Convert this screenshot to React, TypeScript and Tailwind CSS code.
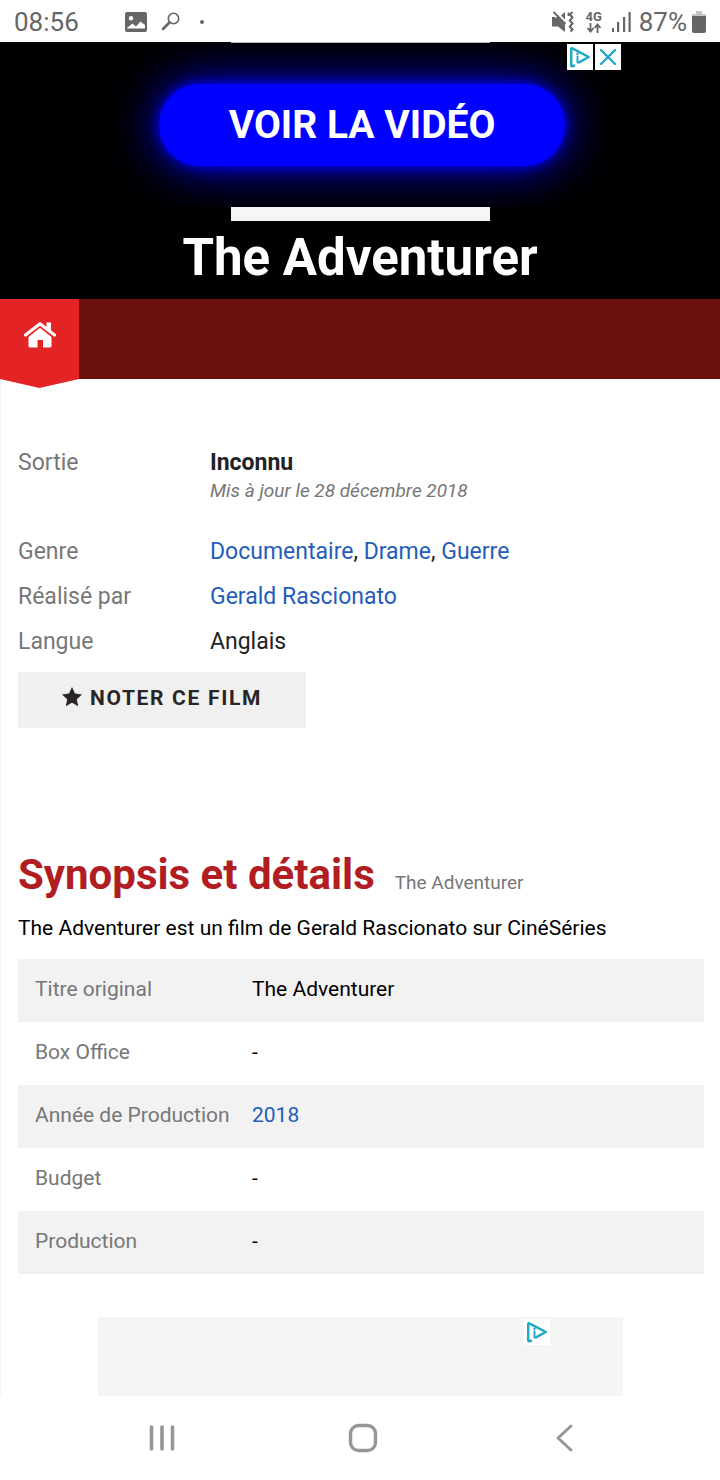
import React from "react";

const links = "text-[#245db8]";

const facts = [
  { label: "Titre original", value: "The Adventurer" },
  { label: "Box Office", value: "-" },
  { label: "Année de Production", value: "2018", href: "#2018" },
  { label: "Budget", value: "-" },
  { label: "Production", value: "-" },
];

const AdChoicesIcon: React.FC = () => (
  <svg viewBox="0 0 26 26" className="size-[26px] bg-white" fill="none" stroke="#1fa9c4" strokeLinejoin="round" strokeLinecap="round">
    <path d="M7 21.800 5 22.300Q4.200 22.300 4.200 21V5Q4.200 4 5.400 4.400L21.800 13 12 18.300" strokeWidth="2.500" />
    <path d="M10.500 12.500V18.500" strokeWidth="2" />
    <circle cx="10.500" cy="9.700" r="1.200" fill="#1fa9c4" stroke="none" />
  </svg>
);

const StatusBar: React.FC = () => (
  <div className="flex h-[42px] items-center justify-between bg-white pt-0.5 pr-[13px] pl-3.5 text-[26px] leading-8 text-[#666]">
    <div className="flex items-center">
      <span className="w-[111px]">08:56</span>
      <svg viewBox="0 0 22 20" className="mr-3.5 h-5 w-[22px]" fill="#666">
        <path fillRule="evenodd" d="M2 0H20Q22 0 22 2V18Q22 20 20 20H2Q0 20 0 18V2Q0 0 2 0ZM2 16.500H20V13L15.500 9.500 11 14.500 7.500 11.500 2 16ZM6 4A2.200 2.200 0 1 0 6 8.400 2.200 2.200 0 1 0 6 4Z" />
      </svg>
      <svg viewBox="0 0 20 20" className="mr-[19px] size-5" fill="none" stroke="#666">
        <circle cx="12.500" cy="6.500" r="5.200" strokeWidth="1.600" />
        <path d="M8.500 10.500 2 17" strokeWidth="2.600" strokeLinecap="round" />
      </svg>
      <span className="size-1 rounded-full bg-[#666]" />
    </div>
    <div className="flex items-center">
      <svg viewBox="0 0 22 24" className="mr-3 h-6 w-[22px]" fill="none" stroke="#666">
        <path d="M0 7H3L13 17V22L6 16.500H0ZM9 5.500 13 2V9.500Z" fill="#666" stroke="none" />
        <path d="M1.500 2 13.500 14" strokeWidth="1.800" />
        <path d="M5 6 13 14V17L4 9Z" fill="#666" stroke="none" />
        <path d="M16.500 2.500V6" strokeWidth="1.800" />
        <path d="M20.500 2 17.800 4.500 20.500 7.500 17.800 10.500 20.500 13.500 17.800 16.500 20.500 19.500 18.500 21.500" strokeWidth="2" />
      </svg>
      <div className="mr-2.5 flex w-4 flex-col items-center">
        <span className="text-[13px] leading-3 font-bold">4G</span>
        <svg viewBox="0 0 16 10" className="h-2.5 w-4" fill="none" stroke="#666" strokeWidth="1.800">
          <path d="M4.500 0V8M1.500 5 4.500 8.500 7.500 5M11.500 10V2M8.500 5 11.500 1.500 14.500 5" />
        </svg>
      </div>
      <svg viewBox="0 0 19 20" className="mr-2 h-5 w-[19px]" fill="#666">
        <path d="M0 16H2V20H0ZM5 10H7.200V20H5ZM11 5H13.200V20H11ZM16.500 0H18.700V20H16.500Z" />
      </svg>
      <span className="mr-1">87%</span>
      <svg viewBox="0 0 16 22" className="h-[22px] w-4">
        <path d="M5 0H11V3H15V6H1V3H5Z" fill="#c4c4c4" />
        <path d="M1 5H15V20Q15 22 13 22H3Q1 22 1 20Z" fill="#666" />
      </svg>
    </div>
  </div>
);

const AdBanner: React.FC = () => (
  <header className="relative flex h-[257px] flex-col items-center overflow-hidden bg-black text-white">
    <div className="h-px w-[259px] shrink-0 bg-[#bbb]" />
    <div className="flex h-[164px] w-full shrink-0 items-center justify-center overflow-hidden pl-1">
      <button
        type="button"
        className="h-[82px] w-[406px] rounded-full bg-[#0000fe] text-[39px] leading-10 font-bold shadow-[0_0_12px_#0000fe,0_0_50px_#0000fe]"
      >
        VOIR LA VIDÉO
      </button>
    </div>
    <div className="h-3.5 w-[259px] shrink-0 bg-[#f6f6f6]" />
    <h1 className="mt-1.5 text-[51px] leading-[62px] font-bold">The Adventurer</h1>
    <div className="absolute top-0.5 right-[99px] flex gap-0.5">
      <a href="#adchoices" aria-label="AdChoices">
        <AdChoicesIcon />
      </a>
      <button type="button" aria-label="Fermer" className="bg-white">
        <svg viewBox="0 0 26 26" className="size-[26px]" stroke="#1fa9c4" strokeWidth="2.400" strokeLinecap="round">
          <path d="M6 6 20 20M20 6 6 20" />
        </svg>
      </button>
    </div>
  </header>
);

const NavBar: React.FC = () => (
  <nav className="h-20 bg-[#6a110f]">
    <a href="#home" aria-label="Accueil" className="relative flex h-full w-[79px] justify-center bg-[#e42424] pt-[23px]">
      <svg viewBox="0 0 32 26" className="h-[26px] w-8" fill="#fff">
        <path d="M4.500 15 16 5.800 27.500 15V24Q27.500 25.500 26 25.500H19V18H13.500V25.500H6Q4.500 25.500 4.500 24Z" />
        <path d="M1.500 13.500 16 1.700 30.500 13.500" fill="none" stroke="#e42424" strokeWidth="5" />
        <path d="M22.500 0.500H27V10L22.500 6Z" />
        <path d="M1.500 13 16 1.700 30.500 13" fill="none" stroke="#fff" strokeWidth="3.200" strokeLinecap="round" strokeLinejoin="round" />
      </svg>
      <svg viewBox="0 0 79 9" className="absolute top-full left-0 h-[9px] w-full" fill="#e42424">
        <path d="M0 0H79L39.500 9Z" />
      </svg>
    </a>
  </nav>
);

const MovieInfo: React.FC = () => (
  <section className="px-[17px] pt-[68px]">
    <dl className="grid grid-cols-[192px_1fr] gap-y-[13px] text-[23px] leading-8 text-[#222]">
      <dt className="text-[#777]">Sortie</dt>
      <dd className="mb-5">
        <strong className="block">Inconnu</strong>
        <em className="block text-[19px] leading-6 text-[#777]">Mis à jour le 28 décembre 2018</em>
      </dd>
      <dt className="text-[#777]">Genre</dt>
      <dd>
        <a href="#documentaire" className={links}>Documentaire</a>,{" "}
        <a href="#drame" className={links}>Drame</a>,{" "}
        <a href="#guerre" className={links}>Guerre</a>
      </dd>
      <dt className="text-[#777]">Réalisé par</dt>
      <dd>
        <a href="#rascionato" className={links}>Gerald Rascionato</a>
      </dd>
      <dt className="text-[#777]">Langue</dt>
      <dd>Anglais</dd>
    </dl>
    <button
      type="button"
      className="mt-3.5 flex h-14 w-72 items-center justify-center gap-2 bg-[#f0f0f0] pb-0.5 text-[21px] font-bold tracking-[0.08em] text-[#2a2525]"
    >
      <svg viewBox="0 0 20 20" className="mb-1 size-5" fill="currentColor">
        <path d="M10 0 13 6.600 20 7.400 14.800 12.200 16.200 19.200 10 15.700 3.800 19.200 5.200 12.200 0 7.400 7 6.600Z" />
      </svg>
      NOTER CE FILM
    </button>
  </section>
);

const Synopsis: React.FC = () => (
  <section className="pt-[121px] pr-4 pl-[17px]">
    <h2 className="flex items-baseline gap-5 text-[42px] leading-[52px] font-bold text-[#b11d22]">
      Synopsis et détails
      <span className="text-[19px] font-normal text-[#777]">The Adventurer</span>
    </h2>
    <p className="mt-[3px] text-[21px] leading-8 text-black">The Adventurer est un film de Gerald Rascionato sur CinéSéries</p>
    <table className="mt-[15px] w-full text-left text-[21px] leading-8">
      <tbody>
        {facts.map((fact) => (
          <tr key={fact.label} className="h-[63px] odd:bg-[#f2f2f2]">
            <th scope="row" className="w-[234px] pb-1 pl-[17px] font-normal text-[#777]">
              {fact.label}
            </th>
            <td className="pb-1 text-black">
              {fact.href ? <a href={fact.href} className={links}>{fact.value}</a> : fact.value}
            </td>
          </tr>
        ))}
      </tbody>
    </table>
  </section>
);

const BottomAd: React.FC = () => (
  <aside className="mt-[43px] mr-[97px] ml-[97px] flex h-[79px] justify-end bg-[#f5f5f5] pt-0.5 pr-[73px]">
    <a href="#adchoices" aria-label="AdChoices">
      <AdChoicesIcon />
    </a>
  </aside>
);

const SystemNav: React.FC = () => (
  <div className="flex h-[84px] items-center justify-around bg-white pr-[54px] pl-[61px]">
    <button type="button" aria-label="Applications récentes">
      <svg viewBox="0 0 30 30" className="size-[30px]" stroke="#969696" strokeWidth="3.600" strokeLinecap="round">
        <path d="M4.500 4V26M15 4V26M25.500 4V26" />
      </svg>
    </button>
    <button type="button" aria-label="Écran d'accueil">
      <svg viewBox="0 0 30 30" className="size-[30px]" fill="none" stroke="#969696" strokeWidth="3.400">
        <rect x="2.500" y="2.500" width="25" height="25" rx="8" />
      </svg>
    </button>
    <button type="button" aria-label="Retour">
      <svg viewBox="0 0 30 30" className="size-[30px]" fill="none" stroke="#969696" strokeWidth="3" strokeLinecap="round" strokeLinejoin="round">
        <path d="M21 3 8 15 21 27" />
      </svg>
    </button>
  </div>
);

export default function App() {
  return (
    <div className="bg-white font-[Roboto,sans-serif]">
      <StatusBar />
      <AdBanner />
      <NavBar />
      <main className="border-l border-[#f3f3f3]">
        <MovieInfo />
        <Synopsis />
        <BottomAd />
      </main>
      <SystemNav />
    </div>
  );
}
